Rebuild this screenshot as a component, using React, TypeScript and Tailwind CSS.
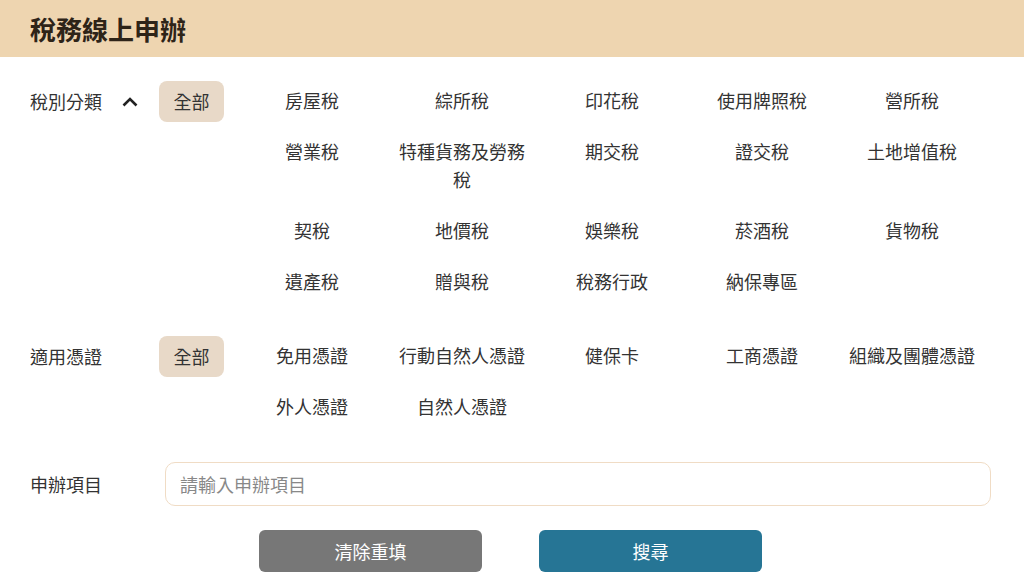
import React, { useState } from 'react';

const taxTypes = [
  '房屋稅',
  '綜所稅',
  '印花稅',
  '使用牌照稅',
  '營所稅',
  '營業稅',
  '特種貨務及勞務稅',
  '期交稅',
  '證交稅',
  '土地增值稅',
  '契稅',
  '地價稅',
  '娛樂稅',
  '菸酒稅',
  '貨物稅',
  '遺產稅',
  '贈與稅',
  '稅務行政',
  '納保專區',
];

const certTypes = ['免用憑證', '行動自然人憑證', '健保卡', '工商憑證', '組織及團體憑證', '外人憑證', '自然人憑證'];

const OptionGrid: React.FC<{ items: string[] }> = ({ items }) => (
  <div className="grid grid-cols-[repeat(5,150px)] items-start gap-y-[10px] ml-[13px]">
    {items.map((item) => (
      <button key={item} className="px-2 pt-[5px] pb-[8px] text-center leading-7 text-[18px] text-[#333]">
        {item}
      </button>
    ))}
  </div>
);

const App: React.FC = () => {
  const [keyword, setKeyword] = useState('');

  return (
    <div
      className="w-[1024px] h-[584px] bg-white overflow-hidden text-[#333]"
      style={{ fontFamily: '"Noto Sans CJK TC", "Noto Sans", sans-serif' }}
    >
      <div className="h-[57px] bg-[#EED5B0] flex items-center px-[30px]">
        <h1 className="text-[26px] font-semibold text-[#2e2418]">稅務線上申辦</h1>
      </div>

      <div className="pl-[30px] pr-[33px] pt-[24px]">
        {/* 稅別分類 */}
        <div className="flex items-start">
          <div className="w-[129px] h-[41px] flex items-center text-[18px]">
            <span>稅別分類</span>
            <svg width="16" height="10" viewBox="0 0 16 10" fill="none" stroke="#222" strokeWidth="2.6" className="ml-[20px]">
              <path d="M1.5 8.5L8 2l6.5 6.5" />
            </svg>
          </div>
          <button className="w-[65px] h-[41px] rounded-lg bg-[#E8D9C8] text-[18px] text-[#333]">全部</button>
          <OptionGrid items={taxTypes} />
        </div>

        {/* 適用憑證 */}
        <div className="flex items-start mt-[33px]">
          <div className="w-[129px] h-[41px] flex items-center text-[18px]">適用憑證</div>
          <button className="w-[65px] h-[41px] rounded-lg bg-[#E8D9C8] text-[18px] text-[#333]">全部</button>
          <OptionGrid items={certTypes} />
        </div>

        {/* 申辦項目 */}
        <div className="flex items-center mt-[34px]">
          <div className="w-[135px] text-[18px]">申辦項目</div>
          <input
            value={keyword}
            onChange={(e) => setKeyword(e.target.value)}
            placeholder="請輸入申辦項目"
            className="flex-1 h-[44px] rounded-[10px] border border-[#F0DCC5] px-[14px] text-[18px] placeholder:text-[#888] outline-none"
          />
        </div>

        <div className="flex justify-center gap-[57px] mt-[24px]">
          <button className="w-[223px] h-[42px] rounded-md bg-[#777777] text-white text-[18px]">清除重填</button>
          <button className="w-[223px] h-[42px] rounded-md bg-[#267595] text-white text-[18px]">搜尋</button>
        </div>
      </div>
    </div>
  );
};

export default App;
